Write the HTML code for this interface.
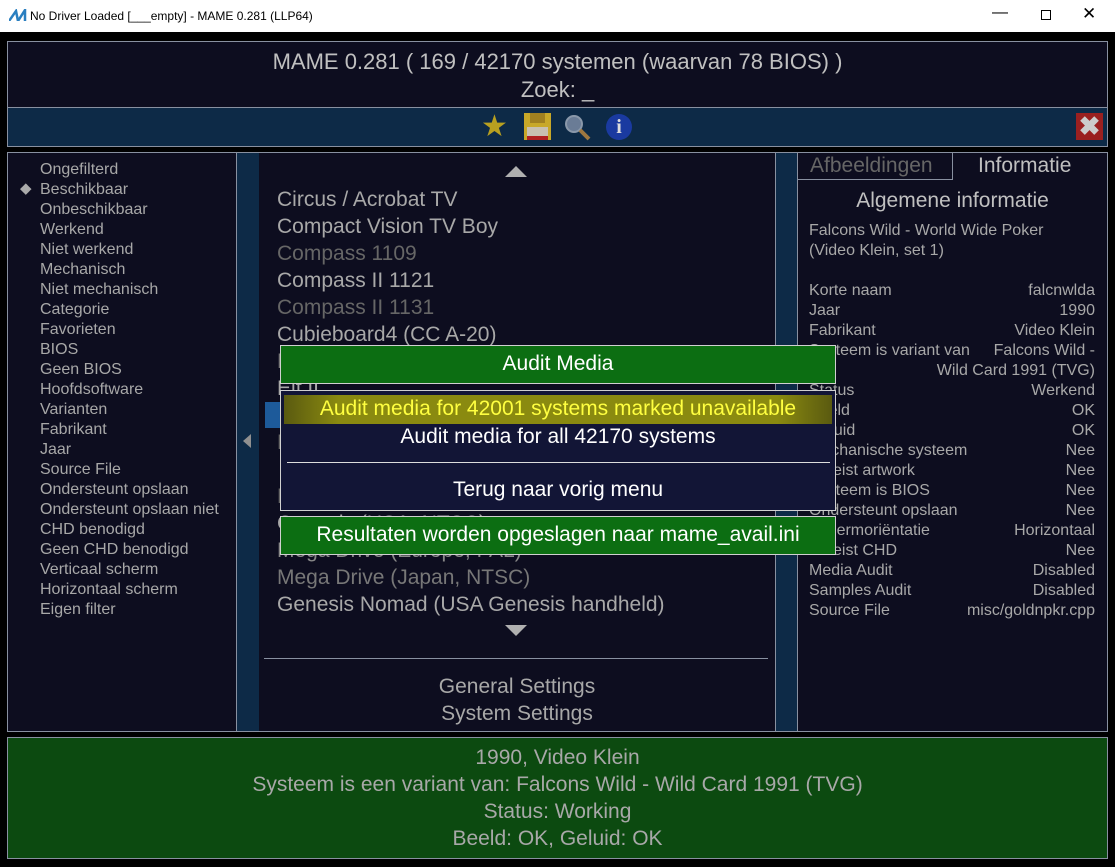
<!DOCTYPE html>
<html><head><meta charset="utf-8"><style>
*{margin:0;padding:0;box-sizing:border-box}
body{width:1115px;height:867px;background:#000;font-family:"Liberation Sans",sans-serif;position:relative;overflow:hidden;color:#c8c8c8}
.a{position:absolute}
.t{position:absolute;white-space:nowrap}
</style></head><body>
<div class="a" style="left:0;top:0;width:1115px;height:32px;background:#fff;color:#000;font-size:12px">
<svg class="a" style="left:9px;top:9px" width="18" height="12" viewBox="0 0 18 12"><path d="M0 12L7 2L9 12L16 1L16 12" fill="none" stroke="#2a7fc0" stroke-width="2.5"/></svg>
<div class="t" style="left:30px;top:9px">No Driver Loaded [___empty] - MAME 0.281 (LLP64)</div>
<div class="t" style="left:992px;top:4px;font-size:16px">&#8212;</div>
<div class="a" style="left:1041px;top:10px;width:10px;height:10px;border:1px solid #000"></div>
<div class="t" style="left:1082px;top:4px;font-size:17px">&#10005;</div>
</div>
<div class="a" style="left:1px;top:32px;width:1113px;height:834px;background:#000"></div>
<div class="a" style="left:7px;top:41px;width:1101px;height:67px;background:#0d0d1f;border:1px solid #8890a0"></div>
<div class="t" style="left:7px;width:1101px;text-align:center;top:49px;font-size:22px;color:#c0c0c0">MAME 0.281 ( 169 / 42170 systemen (waarvan 78 BIOS) )</div>
<div class="t" style="left:7px;width:1101px;text-align:center;top:77px;font-size:22px;color:#c0c0c0">Zoek: _</div>
<div class="a" style="left:7px;top:107px;width:1101px;height:40px;background:#0d2a47;border:1px solid #8890a0"></div>
<div class="t" style="left:481px;top:109px;font-size:30px;color:#b8a020">&#9733;</div>
<div class="a" style="left:524px;top:113px;width:27px;height:27px;background:#c8a828"><div class="a" style="left:6px;top:0;width:15px;height:10px;background:#a08020"></div><div class="a" style="left:3px;top:14px;width:21px;height:13px;background:#c8c0b0;border-bottom:4px solid #b02020"></div></div>
<svg class="a" style="left:562px;top:112px" width="30" height="30"><circle cx="12" cy="12" r="8" fill="#6a7c96" stroke="#8a98aa" stroke-width="2"/><line x1="18" y1="18" x2="27" y2="27" stroke="#a07840" stroke-width="4"/></svg>
<div class="a" style="left:606px;top:114px;width:26px;height:26px;border-radius:50%;background:#1a3aa0;color:#ddd;font:bold 20px 'Liberation Serif',serif;text-align:center;line-height:26px">i</div>
<div class="a" style="left:1076px;top:113px;width:27px;height:27px;background:#9a2020;color:#ccc;font:bold 26px 'Liberation Sans';text-align:center;line-height:27px">&#10006;</div>
<div class="a" style="left:7px;top:152px;width:252px;height:580px;background:#0d0d1f;border:1px solid #8890a0"></div>
<div class="a" style="left:236px;top:153px;width:23px;height:578px;background:#0d2a47;border-left:1px solid #8890a0"></div>
<div class="a" style="left:243px;top:434px;width:0;height:0;border-top:7px solid transparent;border-bottom:7px solid transparent;border-right:8px solid #909090"></div>
<div class="t" style="left:20px;top:179px;font-size:15px;color:#aaa">&#9670;</div>
<div class="t" style="left:40px;top:160px;font-size:16px;line-height:20px;color:#a8a8a8">Ongefilterd<br>Beschikbaar<br>Onbeschikbaar<br>Werkend<br>Niet werkend<br>Mechanisch<br>Niet mechanisch<br>Categorie<br>Favorieten<br>BIOS<br>Geen BIOS<br>Hoofdsoftware<br>Varianten<br>Fabrikant<br>Jaar<br>Source File<br>Ondersteunt opslaan<br>Ondersteunt opslaan niet<br>CHD benodigd<br>Geen CHD benodigd<br>Verticaal scherm<br>Horizontaal scherm<br>Eigen filter</div>
<div class="a" style="left:259px;top:152px;width:516px;height:580px;background:#0d0d1f;border-top:1px solid #8890a0;border-bottom:1px solid #8890a0"></div>
<div class="a" style="left:775px;top:152px;width:23px;height:580px;background:#0d2a47;border:1px solid #8890a0"></div>
<div class="a" style="left:505px;top:166px;width:0;height:0;border-left:11px solid transparent;border-right:11px solid transparent;border-bottom:11px solid #b0b0b0"></div>
<div class="a" style="left:265px;top:402px;width:20px;height:26px;background:#1d5a9a"></div>
<div class="t" style="left:277px;top:186px;font-size:21px;line-height:27px;color:#a8a8a8">Circus / Acrobat TV<br>Compact Vision TV Boy<br><span style="color:#666">Compass 1109</span><br>Compass II 1121<br><span style="color:#666">Compass II 1131</span><br>Cubieboard4 (CC A-20)<br><span style="color:#777">DigiBLAST</span><br>Elf II<br><br><span style="color:#666">Famicom</span><br><br><span style="color:#666">Fire One</span><br>Genesis (USA, NTSC)<br><span style="color:#888">Mega Drive (Europe, PAL)</span><br><span style="color:#777">Mega Drive (Japan, NTSC)</span><br>Genesis Nomad (USA Genesis handheld)</div>
<div class="a" style="left:505px;top:625px;width:0;height:0;border-left:11px solid transparent;border-right:11px solid transparent;border-top:11px solid #b0b0b0"></div>
<div class="a" style="left:264px;top:658px;width:504px;height:1px;background:#8890a0"></div>
<div class="t" style="left:259px;width:516px;text-align:center;top:673px;font-size:21px;line-height:27px;color:#a8a8a8">General Settings<br>System Settings</div>
<div class="a" style="left:797px;top:152px;width:311px;height:580px;background:#0d0d1f;border:1px solid #8890a0"></div>
<div class="a" style="left:797px;top:152px;width:156px;height:28px;border:1px solid #8890a0"></div>
<div class="t" style="left:810px;top:154px;font-size:21px;color:#666">Afbeeldingen</div>
<div class="t" style="left:978px;top:154px;font-size:21px;color:#c0c0c0">Informatie</div>
<div class="t" style="left:797px;width:311px;text-align:center;top:189px;font-size:21px;color:#c0c0c0">Algemene informatie</div>
<div class="t" style="left:809px;top:221px;font-size:16px;line-height:20px;color:#a8a8a8">Falcons Wild - World Wide Poker<br>(Video Klein, set 1)</div>
<div class="t" style="left:809px;top:281px;font-size:16px;line-height:20px;color:#a8a8a8">Korte naam<br>Jaar<br>Fabrikant<br>Systeem is variant van<br><br>Status<br>Beeld<br>Geluid<br>Mechanische systeem<br>Vereist artwork<br>Systeem is BIOS<br>Ondersteunt opslaan<br>Schermoriëntatie<br>Vereist CHD<br>Media Audit<br>Samples Audit<br>Source File</div>
<div class="t" style="right:20px;top:281px;font-size:16px;line-height:20px;color:#a8a8a8;text-align:right">falcnwlda<br>1990<br>Video Klein<br>Falcons Wild -<br>Wild Card 1991 (TVG)<br>Werkend<br>OK<br>OK<br>Nee<br>Nee<br>Nee<br>Nee<br>Horizontaal<br>Nee<br>Disabled<br>Disabled<br>misc/goldnpkr.cpp</div>
<div class="a" style="left:7px;top:737px;width:1101px;height:122px;background:#0c4a10;border:1px solid #8890a0"></div>
<div class="t" style="left:7px;width:1101px;text-align:center;top:744px;font-size:21px;line-height:27px;color:#a8a8a8">1990, Video Klein<br>Systeem is een variant van: Falcons Wild - Wild Card 1991 (TVG)<br>Status: Working<br>Beeld: OK, Geluid: OK</div>
<div class="a" style="left:280px;top:345px;width:556px;height:39px;background:#0c6e12;border:1px solid #d0d0d0"></div>
<div class="t" style="left:280px;width:556px;text-align:center;top:352px;font-size:21px;color:#fff">Audit Media</div>
<div class="a" style="left:280px;top:390px;width:556px;height:121px;background:#121536;border:1px solid #d0d0d0"></div>
<div class="a" style="left:284px;top:395px;width:548px;height:29px;background:linear-gradient(90deg,#5a5a10,#8a8a10 10%,#8a8a10 90%,#5a5a10)"></div>
<div class="t" style="left:280px;width:556px;text-align:center;top:397px;font-size:21px;color:#ffff40">Audit media for 42001 systems marked unavailable</div>
<div class="t" style="left:280px;width:556px;text-align:center;top:425px;font-size:21px;color:#fff">Audit media for all 42170 systems</div>
<div class="a" style="left:287px;top:462px;width:543px;height:1px;background:#ddd"></div>
<div class="t" style="left:280px;width:556px;text-align:center;top:478px;font-size:21px;color:#fff">Terug naar vorig menu</div>
<div class="a" style="left:280px;top:516px;width:556px;height:39px;background:#0c6e12;border:1px solid #d0d0d0"></div>
<div class="t" style="left:280px;width:556px;text-align:center;top:523px;font-size:21px;color:#fff">Resultaten worden opgeslagen naar mame_avail.ini</div>
</body></html>
